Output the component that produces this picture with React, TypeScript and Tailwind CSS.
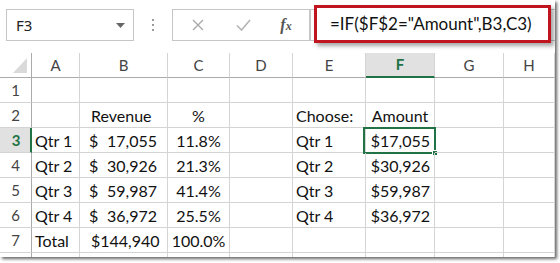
import React from "react";

const cols = [48, 88, 62, 63, 73, 69, 69, 51];
const letters = ["A", "B", "C", "D", "E", "F", "G", "H"];

type Cell = string | [string, string] | null;

const rows: Cell[][] = [
  [null, null, null, null, null, null, null, null],
  [null, "Revenue", "%", null, "Choose:", "Amount", null, null],
  ["Qtr 1", ["$", "17,055"], "11.8%", null, "Qtr 1", "$17,055", null, null],
  ["Qtr 2", ["$", "30,926"], "21.3%", null, "Qtr 2", "$30,926", null, null],
  ["Qtr 3", ["$", "59,987"], "41.4%", null, "Qtr 3", "$59,987", null, null],
  ["Qtr 4", ["$", "36,972"], "25.5%", null, "Qtr 4", "$36,972", null, null],
  ["Total", "$144,940", "100.0%", null, null, null, null, null],
];

function CellContent({ v, col, row }: { v: Cell; col: number; row: number }) {
  if (v === null) return null;
  if (Array.isArray(v)) {
    return (
      <div className="flex w-full justify-between pl-[9px] pr-[10px]">
        <span>{v[0]}</span>
        <span>{v[1]}</span>
      </div>
    );
  }
  if (col === 1) return <div className="w-full pl-[11px]">{v}</div>;
  if (col === 2) return <div className="w-full text-center">{v}</div>;
  if (col === 5) {
    if (row === 1) return <div className="w-full text-center whitespace-nowrap">{v}</div>;
    return <div className="w-full text-right pr-[4px]">{v}</div>;
  }
  return <div className="w-full pl-[3px] whitespace-nowrap">{v}</div>;
}

export default function App() {
  const font = { fontFamily: "Lato, 'Open Sans', sans-serif" };
  return (
    <div className="w-[560px] h-[263px] bg-white overflow-hidden relative">
      <div className="w-[555px] h-[257px] bg-white shadow-[2px_2px_3px_rgba(0,0,0,0.6)] relative overflow-hidden">
        {/* Formula bar */}
        <div className="h-[53px] flex items-start pl-[6px] pt-[9px]">
          <div
            className="w-[128px] h-[32px] border border-[#c6c6c6] flex items-center justify-between pl-[9px] pr-[8px] text-[15px] text-[#222]"
            style={{ fontFamily: "'Noto Sans', sans-serif" }}
          >
            <span>F3</span>
            <svg width="9" height="5" viewBox="0 0 9 5">
              <path d="M0 0 L9 0 L4.5 5 Z" fill="#666" />
            </svg>
          </div>
          <div className="w-[38px] h-[32px] flex flex-col items-center justify-center gap-[3px]">
            <div className="w-[2px] h-[2px] bg-[#9a9a9a]" />
            <div className="w-[2px] h-[2px] bg-[#9a9a9a]" />
            <div className="w-[2px] h-[2px] bg-[#9a9a9a]" />
          </div>
          <div className="w-[138px] h-[32px] border border-[#c6c6c6] flex items-center">
            <div className="w-[50px] flex justify-center">
              <svg width="12" height="12" viewBox="0 0 12 12">
                <path d="M1 1 L11 11 M11 1 L1 11" stroke="#a8a8a8" strokeWidth="1.3" />
              </svg>
            </div>
            <div className="w-[40px] flex justify-center">
              <svg width="15" height="12" viewBox="0 0 15 12">
                <path d="M1 6.5 L5.5 11 L14 1" stroke="#b4b4b4" strokeWidth="1.6" fill="none" />
              </svg>
            </div>
            <div
              className="w-[46px] flex justify-center items-baseline text-[16px] italic text-[#555] font-semibold"
              style={{ fontFamily: "'Liberation Serif', serif" }}
            >
              f<span className="text-[12px]">x</span>
            </div>
          </div>
          <div className="flex-1 h-[32px] border border-[#c6c6c6] border-r-0" />
        </div>

        {/* Red annotation box */}
        <div
          className="absolute left-[314px] top-[5px] w-[237px] h-[38px] border-[3px] border-[#c0141e] bg-white shadow-[3px_3px_4px_rgba(0,0,0,0.35)] flex items-center pl-[13px] text-[17px] text-[#111]"
          style={font}
        >
          =IF($F$2="Amount",B3,C3)
        </div>

        {/* Grid */}
        <div
          className="grid text-[16px] text-[#111]"
          style={{
            ...font,
            gridTemplateColumns: `32px ${cols.map((c) => c + "px").join(" ")}`,
            gridTemplateRows: "25px repeat(8, 25px)",
          }}
        >
          {/* header row */}
          <div className="border-r border-b border-[#ababab] relative">
            <svg className="absolute left-[13px] top-[5px]" width="14" height="15" viewBox="0 0 14 15">
              <path d="M14 0 L14 15 L0 15 Z" fill="#dadada" />
            </svg>
          </div>
          {letters.map((l) => (
            <div
              key={l}
              className={
                l === "F"
                  ? "bg-[#e1e1e1] border-r border-[#d4d4d4] border-b-2 border-b-[#217346] flex items-center justify-center text-[15px] font-bold text-[#217346]"
                  : "border-r border-[#d4d4d4] border-b border-b-[#ababab] flex items-center justify-center text-[15px] text-[#444]"
              }
            >
              {l}
            </div>
          ))}
          {rows.map((r, ri) => (
            <React.Fragment key={ri}>
              <div
                className={
                  ri === 2
                    ? "bg-[#e1e1e1] border-b border-[#d4d4d4] border-r-2 border-r-[#217346] flex items-center justify-center pl-[2px] text-[15px] font-bold text-[#217346]"
                    : "border-b border-[#d4d4d4] border-r border-r-[#ababab] flex items-center justify-center text-[15px] text-[#444]"
                }
              >
                {ri + 1}
              </div>
              {r.map((v, ci) => (
                <div
                  key={ci}
                  className="border-r border-b border-[#d4d4d4] flex items-center pt-[2px] relative whitespace-nowrap"
                >
                  <CellContent v={v} col={ci} row={ri} />
                  {ri === 2 && ci === 5 && (
                    <div className="absolute left-[-3px] top-[-1px] right-[-2px] bottom-[-2px] border-2 border-[#217346]">
                      <div className="absolute right-[-4px] bottom-[-4px] w-[6px] h-[6px] bg-[#217346] border border-white" />
                    </div>
                  )}
                </div>
              ))}
            </React.Fragment>
          ))}
          <div className="border-r border-r-[#ababab]" />
          {cols.map((_, i) => (
            <div key={i} className="border-r border-[#d4d4d4]" />
          ))}
        </div>
      </div>
    </div>
  );
}
